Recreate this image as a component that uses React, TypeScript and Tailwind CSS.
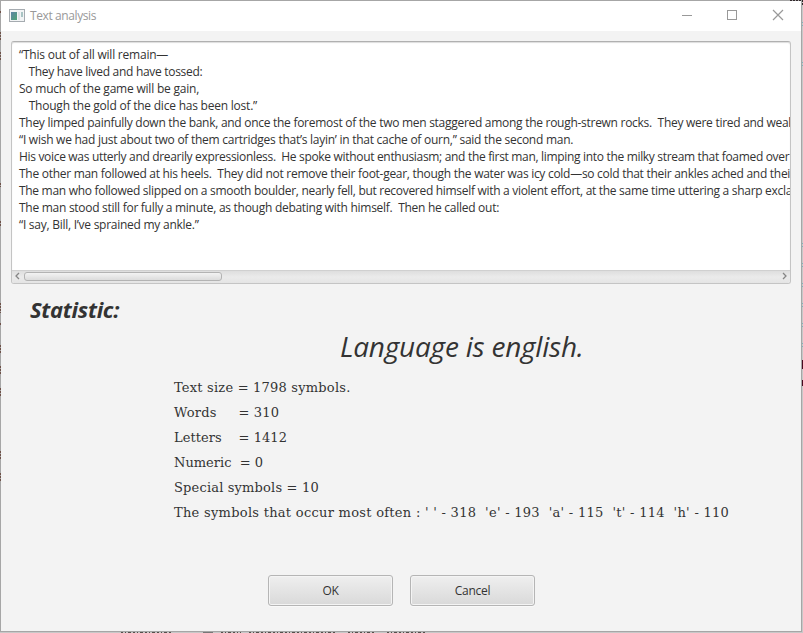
type Line = { text: string; cls: string };

const poem: Line[] = [
  { text: '“This out of all will remain—', cls: 'tracking-[-0.22px]' },
  { text: '   They have lived and have tossed:', cls: 'pl-px tracking-[-0.3px]' },
  { text: 'So much of the game will be gain,', cls: 'tracking-[-0.21px]' },
  { text: '   Though the gold of the dice has been lost.”', cls: 'pl-px tracking-[-0.22px]' },
  { text: 'They limped painfully down the bank, and once the foremost of the two men staggered among the rough-strewn rocks.  They were tired and weak', cls: 'tracking-[-0.28px]' },
  { text: '“I wish we had just about two of them cartridges that’s layin’ in that cache of ourn,” said the second man.', cls: 'tracking-[-0.26px]' },
  { text: 'His voice was utterly and drearily expressionless.  He spoke without enthusiasm; and the first man, limping into the milky stream that foamed over', cls: 'tracking-[-0.32px]' },
  { text: 'The other man followed at his heels.  They did not remove their foot-gear, though the water was icy cold—so cold that their ankles ached and thei', cls: 'tracking-[-0.28px]' },
  { text: 'The man who followed slipped on a smooth boulder, nearly fell, but recovered himself with a violent effort, at the same time uttering a sharp excla', cls: 'tracking-[-0.3px]' },
  { text: 'The man stood still for fully a minute, as though debating with himself.  Then he called out:', cls: 'tracking-[-0.275px]' },
  { text: '“I say, Bill, I’ve sprained my ankle.”', cls: 'tracking-[-0.26px]' },
];

const stats: Line[] = [
  { text: 'Text size = 1798 symbols.', cls: 'tracking-[0.21px]' },
  { text: 'Words     = 310', cls: 'tracking-[0.22px]' },
  { text: 'Letters    = 1412', cls: 'tracking-[0.06px]' },
  { text: 'Numeric  = 0', cls: 'tracking-[0px]' },
  { text: 'Special symbols = 10', cls: 'tracking-[0.17px]' },
  { text: "The symbols that occur most often : ' ' - 318  'e' - 193  'a' - 115  't' - 114  'h' - 110", cls: 'tracking-[0.28px]' },
];

function TitleBar() {
  return (
    <header className="flex h-[30px] shrink-0 items-center bg-white pl-2 text-[#999]">
      <svg width="16" height="14" viewBox="0 0 16 14" shapeRendering="crispEdges">
        <defs>
          <linearGradient id="app" x1="0" y1="0" x2="1" y2="1">
            <stop offset="0" stopColor="#5d83a5" />
            <stop offset="1" stopColor="#4fa374" />
          </linearGradient>
        </defs>
        <rect x="0.5" y="0.5" width="15" height="12" fill="#f2f4f5" stroke="#a5abb0" />
        <rect x="2" y="3" width="6" height="8" fill="url(#app)" />
        <rect x="9" y="3" width="2" height="8" fill="#dfe3e6" />
        <rect x="12" y="3" width="2" height="5" fill="#a9c4c4" />
      </svg>
      <h1 className="ml-[5px] grow text-[12px] tracking-[-0.4px]">Text analysis</h1>
      <svg width="119" height="30" viewBox="0 0 119 30" fill="none" stroke="#999" shapeRendering="crispEdges">
        <path d="M0 14.5h10M45.5 9.5h9v9h-9z" />
        <path d="M91 9l10 10M101 9l-10 10" shapeRendering="auto" strokeWidth="1.2" />
      </svg>
    </header>
  );
}

function ScrollBar() {
  return (
    <div className="flex h-[13px] shrink-0 items-center border-t border-[#d0d0d0] bg-linear-to-b from-[#dedede] via-[#ebebeb] to-[#e4e4e4] pr-[3px] pb-[2px] pl-[3px]">
      <svg width="5" height="8" viewBox="0 0 5 8" fill="none" stroke="#858585" strokeWidth="1.3">
        <path d="M4 1L1 4l3 3" />
      </svg>
      <div className="ml-1 h-[9px] w-[198px] rounded-[3px] border border-[#b3b3b3] bg-linear-to-b from-[#f3f3f3] to-[#dcdcdc]" />
      <div className="grow" />
      <svg width="5" height="8" viewBox="0 0 5 8" fill="none" stroke="#858585" strokeWidth="1.3">
        <path d="M1 1l3 3-3 3" />
      </svg>
    </div>
  );
}

function DialogButton({ label }: { label: string }) {
  return (
    <button className="h-[31px] w-[125px] rounded-[3px] border border-[#b5b5b5] bg-linear-to-b from-[#efefef] to-[#d9d9d9] text-[12px] tracking-[-0.3px] shadow-[inset_0_0_0_1px_#f4f4f4,0_1px_0_#f9f9f9]">
      {label}
    </button>
  );
}

// Slivers of the editor behind the dialog that show past its edges.
function EditorEdges() {
  return (
    <svg className="absolute inset-0" width="803" height="633" fill="none" shapeRendering="crispEdges">
      <path d="M121 632.5h52M221 632.5h20M249 632.5h87M348 632.5h28M387 632.5h38" stroke="#55504c" strokeDasharray="2 2 1 2 3 2" />
      <path d="M203 632.5h10" stroke="#777" />
      <path d="M802.5 360v9M802.5 380v6" stroke="#4a0a20" />
      <path d="M790 .5h13M802.5 0v5" stroke="#33292c" strokeDasharray="2 1" />
      <path d="M802.5 243v4M802.5 263v4M802.5 283v4M802.5 303v4M802.5 323v4M802.5 343v4M802.5 22v5M802.5 62v5" stroke="#7fb3bd" strokeDasharray="1 2" />
      <path d="M.5 11v2M.5 32v8M.5 52v8M.5 183v4M.5 221v6M.5 303v10M.5 323v3M.5 345v8M.5 366v8M.5 388v8M.5 451v8M.5 473v8" stroke="#6e5148" strokeDasharray="2 1" />
    </svg>
  );
}

export default function App() {
  return (
    <div className="relative h-[633px] w-[803px] overflow-hidden bg-[#c8c8c8] font-['Open_Sans','Noto_Sans',sans-serif] text-[#333]">
      <main className="flex h-[632px] w-[802px] flex-col border border-[#a6a6a6] bg-[#f3f3f3]">
        <TitleBar />
        <section className="mt-[10px] ml-[10px] flex h-[243px] w-[780px] shrink-0 flex-col overflow-hidden rounded-[3px] border border-[#c4c4c4] border-t-[#b0b0b0] bg-white shadow-[inset_0_1px_1px_#ddd]">
          <div className="grow overflow-hidden pt-[4px] pl-[7px]">
            {poem.map((l) => (
              <p key={l.text} className="h-[17px] text-[12px] leading-[17px] whitespace-pre">
                <span className={l.cls}>{l.text}</span>
              </p>
            ))}
          </div>
          <ScrollBar />
        </section>
        <h2 className="mt-[10px] ml-[29px] text-[22px] leading-[30px] font-bold tracking-[-0.3px] italic">
          <span>Statistic:</span>
        </h2>
        <p className="mt-1 ml-[339px] text-[28px] leading-[36px] tracking-[-0.22px] italic">
          <span>Language is english.</span>
        </p>
        <div className="mt-[11px] ml-[173px] font-['DejaVu_Serif',serif] text-[13px]">
          {stats.map((l) => (
            <p key={l.text} className="h-[25px] leading-[25px] whitespace-pre">
              <span className={l.cls}>{l.text}</span>
            </p>
          ))}
        </div>
        <div className="mt-[50px] ml-[267px] flex gap-[17px]">
          <DialogButton label="OK" />
          <DialogButton label="Cancel" />
        </div>
      </main>
      <EditorEdges />
    </div>
  );
}
